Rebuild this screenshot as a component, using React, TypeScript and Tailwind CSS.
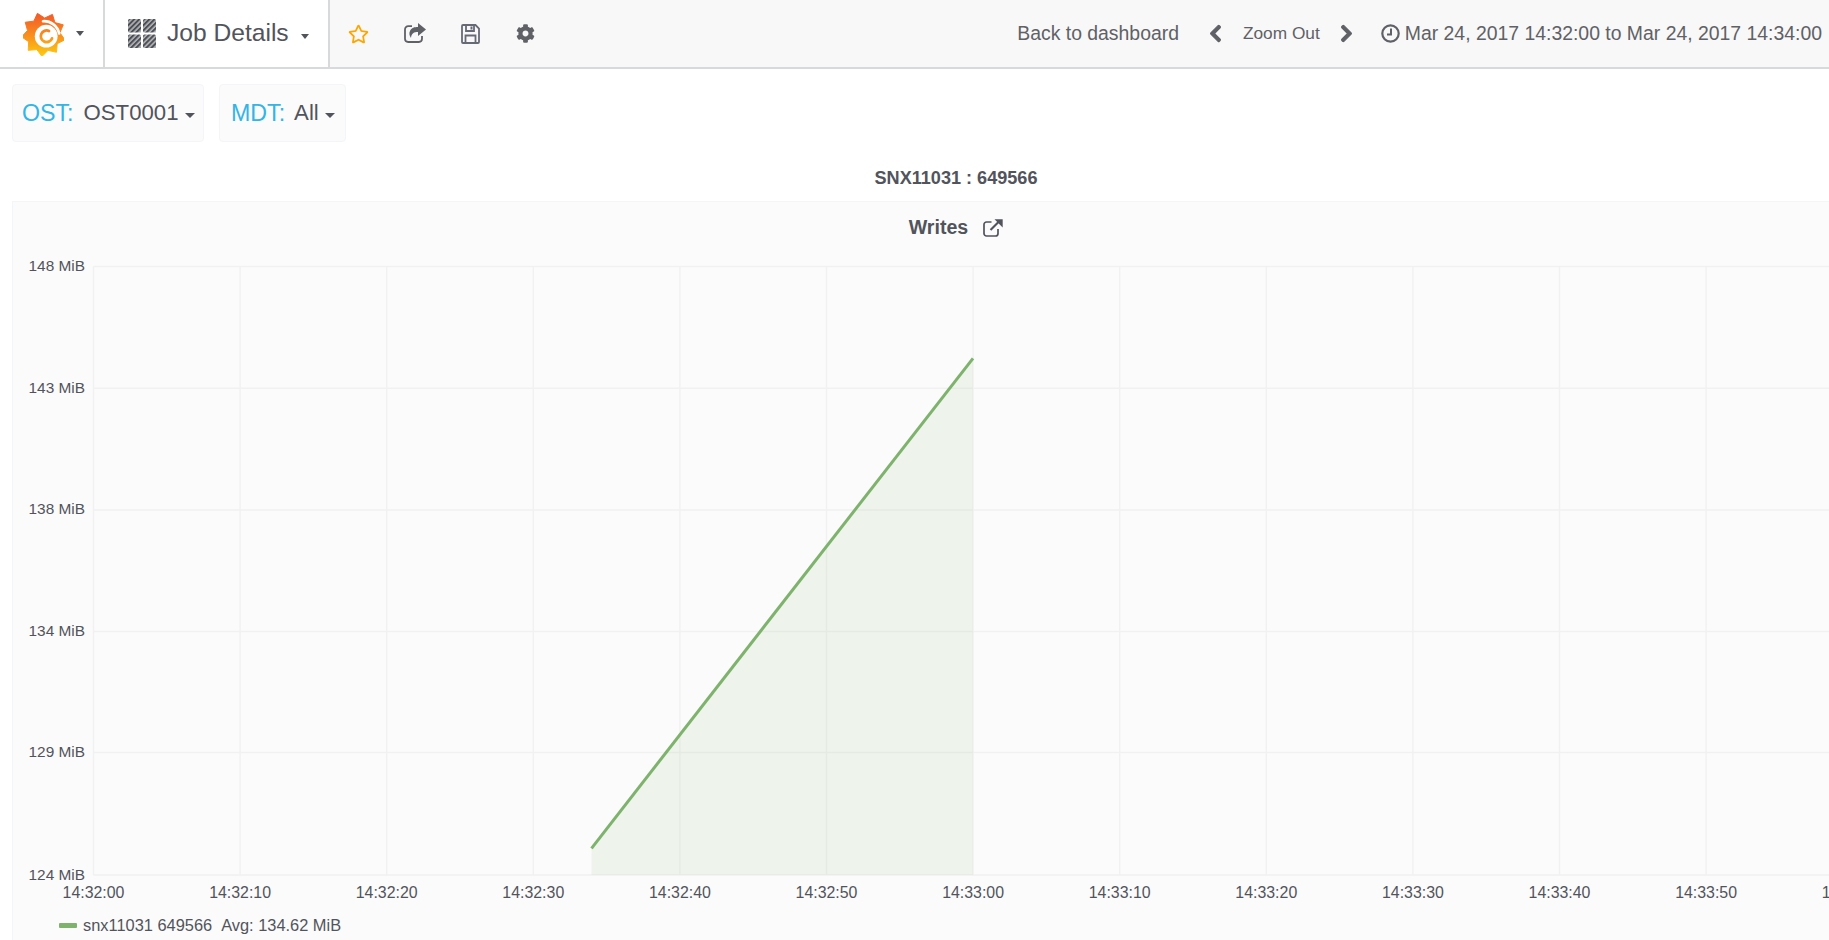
import React from "react";
import { FaRegStar, FaCog, FaChevronLeft, FaChevronRight } from "react-icons/fa";

const sans = "font-['Liberation_Sans',Arial,sans-serif]";

function Caret({ className = "" }: { className?: string }) {
  return <span className={"inline-block w-0 h-0 border-x-[4.5px] border-x-transparent border-t-[5px] border-t-[#52545c] " + className} />;
}

function Logo() {
  const cx = 20.5, cy = 22.5;
  const n = 9;
  const pts: string[] = [];
  for (let i = 0; i < n * 2; i++) {
    const r = i % 2 === 0 ? 22 : 16.5;
    const a = (i * Math.PI) / n - Math.PI / 2 - 0.28;
    pts.push(`${(cx + r * Math.cos(a)).toFixed(2)},${(cy + r * Math.sin(a)).toFixed(2)}`);
  }
  return (
    <svg width="41" height="44" viewBox="0 0 41 44">
      <defs>
        <linearGradient id="gf" gradientUnits="userSpaceOnUse" x1="0" y1="2" x2="0" y2="43">
          <stop offset="0" stopColor="#f15b2a" />
          <stop offset="0.45" stopColor="#f8871f" />
          <stop offset="1" stopColor="#fcc70f" />
        </linearGradient>
      </defs>
      <polygon points={pts.join(" ")} fill="url(#gf)" strokeLinejoin="round" stroke="url(#gf)" strokeWidth="1" />
      <circle cx="23.2" cy="24.2" r="11.4" fill="#fff" />
      <path d="M20 9.2 A15.5 15.5 0 0 1 36.2 21.6" fill="none" stroke="#fff" strokeWidth="2.6" strokeLinecap="round" />
      <path d="M29 26.4 A5.8 5.8 0 1 1 26 19" fill="none" stroke="url(#gf)" strokeWidth="2.8" strokeLinecap="round" />
    </svg>
  );
}

function DashIcon() {
  return (
    <svg width="28" height="29" viewBox="0 0 28 29">
      <defs>
        <pattern id="hatch" width="3.6" height="3.6" patternUnits="userSpaceOnUse" patternTransform="rotate(45)">
          <rect width="3.6" height="3.6" fill="#b4b5b8" />
          <rect width="2" height="3.6" fill="#4c4e55" />
        </pattern>
      </defs>
      <rect x="0" y="0" width="13" height="13.5" rx="1.5" fill="url(#hatch)" />
      <rect x="15" y="0" width="13" height="13.5" rx="1.5" fill="url(#hatch)" />
      <rect x="0" y="15.5" width="13" height="13.5" rx="1.5" fill="url(#hatch)" />
      <rect x="15" y="15.5" width="13" height="13.5" rx="1.5" fill="url(#hatch)" />
    </svg>
  );
}

function ShareIcon() {
  return (
    <svg width="22" height="20" viewBox="0 0 22 20" className="ml-[35px] -mt-[1px]">
      <path d="M8 3.2H4.2A3.2 3.2 0 0 0 1 6.4v9.4A3.2 3.2 0 0 0 4.2 19h10.6a3.2 3.2 0 0 0 3.2-3.2V13" fill="none" stroke="currentColor" strokeWidth="1.8" />
      <path d="M14 0 L22 6.5 L14 13 V9 C10 9 7.5 10 7 15 C5.2 12 5 10 6 8 C7.5 4.5 10.5 4 14 4 Z" fill="currentColor" />
    </svg>
  );
}

function SaveIcon() {
  return (
    <svg width="19" height="20" viewBox="0 0 19 20" className="ml-[35px] text-[#666a75]">
      <path d="M2 1H14.5L18 4.5V18A1 1 0 0 1 17 19H2A1 1 0 0 1 1 18V2A1 1 0 0 1 2 1Z" fill="none" stroke="currentColor" strokeWidth="1.8" />
      <path d="M5 1.5V7H13V1.5" fill="none" stroke="currentColor" strokeWidth="1.8" />
      <rect x="9.5" y="2.5" width="2" height="3" fill="currentColor" />
      <path d="M4.5 18.5V11.5H14.5V18.5" fill="none" stroke="currentColor" strokeWidth="1.8" />
    </svg>
  );
}

function ClockIcon() {
  return (
    <svg width="19" height="19" viewBox="0 0 19 19" className="ml-[28px]">
      <circle cx="9.5" cy="9.5" r="8.2" fill="none" stroke="currentColor" strokeWidth="2.2" />
      <path d="M10 4.5V10.5H6" fill="none" stroke="currentColor" strokeWidth="2" />
    </svg>
  );
}

function ExternalIcon() {
  return (
    <svg width="20" height="18" viewBox="0 0 20 18" className="ml-[15px]">
      <path d="M8.5 3H3.5A2.5 2.5 0 0 0 1 5.5V14.5A2.5 2.5 0 0 0 3.5 17H12.5A2.5 2.5 0 0 0 15 14.5V10" fill="none" stroke="currentColor" strokeWidth="1.7" />
      <path d="M7.5 11 L16 2.5" fill="none" stroke="currentColor" strokeWidth="2.2" />
      <polygon points="11.5,0.3 19.7,0.3 19.7,8.5" fill="currentColor" />
    </svg>
  );
}

function Chart() {
  const left = 80.5;
  const step = 146.6;
  const ys = [
    ["148 MiB", 12.5],
    ["143 MiB", 134.2],
    ["138 MiB", 255.9],
    ["134 MiB", 377.6],
    ["129 MiB", 498.5],
    ["124 MiB", 621],
  ] as [string, number][];
  const times = ["14:32:00", "14:32:10", "14:32:20", "14:32:30", "14:32:40", "14:32:50", "14:33:00", "14:33:10", "14:33:20", "14:33:30", "14:33:40", "14:33:50", "14:34:00"];
  const right = left + step * 12;
  return (
    <svg width="1890" height="650" viewBox="0 0 1890 650" className="block">
      {ys.map(([l, y]) => (
        <g key={l}>
          <line x1={left} x2={right} y1={y} y2={y} stroke="#f1f1f1" strokeWidth="1.5" />
          <text x={left - 8.5} y={y + 4.5} textAnchor="end" fontSize="15.4" fill="#52545c" fontFamily="Liberation Sans">{l}</text>
        </g>
      ))}
      {times.map((t, i) => (
        <g key={t}>
          <line x1={left + i * step} x2={left + i * step} y1={12.5} y2={621} stroke="#f1f1f1" strokeWidth="1.5" />
          <text x={left + i * step} y={644} textAnchor="middle" fontSize="15.9" fill="#52545c" fontFamily="Liberation Sans">{t}</text>
        </g>
      ))}
      <polygon points="578.5,594.3 960,104.3 960,621 578.5,621" fill="#7eb26d" fillOpacity="0.1" />
      <line x1="578.5" y1="594.3" x2="960" y2="104.3" stroke="#7eb26d" strokeWidth="3" />
    </svg>
  );
}

export default function App() {
  return (
    <div className={"w-full h-[940px] overflow-hidden bg-white text-[#52545c] " + sans}>
      <nav className="h-[69px] flex items-stretch bg-[#f8f8f8] border-b-2 border-[#d8d9da]">
        <div className="w-[105px] bg-white border-r-2 border-[#d8d9da] flex items-center pl-[23px] gap-[12px]">
          <Logo />
          <Caret />
        </div>
        <div className="w-[225px] bg-white border-r-2 border-[#d8d9da] flex items-center pl-[23px] whitespace-nowrap">
          <DashIcon />
          <span className="ml-[11px] text-[24.6px] text-[#52545c]">Job Details</span>
          <Caret className="ml-[12px] mt-[6px]" />
        </div>
        <div className="flex items-center text-[#5f6166]">
          <FaRegStar className="ml-[18px] text-[#ffa500] w-[21px] h-[20px]" />
          <ShareIcon />
          <SaveIcon />
          <FaCog className="ml-[36px] w-[19px] h-[19px]" />
        </div>
        <div className="ml-auto flex items-center pr-[7px] text-[#5f6166] whitespace-nowrap">
          <span className="text-[19.4px]">Back to dashboard</span>
          <FaChevronLeft className="ml-[30px] w-[13px] h-[19px]" stroke="currentColor" strokeWidth={30} />
          <span className="ml-[21px] text-[17.3px]">Zoom Out</span>
          <FaChevronRight className="ml-[20px] w-[13px] h-[19px]" stroke="currentColor" strokeWidth={30} />
          <ClockIcon />
          <span className="ml-[5px] text-[19.4px]">Mar 24, 2017 14:32:00 to Mar 24, 2017 14:34:00</span>
        </div>
      </nav>

      <div className="w-[1900px] pl-[12px]">
        <div className="flex gap-[15px] pt-[15px]">
          <div className="h-[58px] w-[192px] bg-[#fbfbfb] border border-[#f4f5f8] rounded-[4px] flex items-center pl-[9px] text-[22.2px] whitespace-nowrap">
            <span className="text-[#33b5e5] text-[23.2px]">OST:</span>
            <span className="ml-[10px]">OST0001</span>
            <Caret className="ml-[6px] mt-[4px] border-x-[5px]" />
          </div>
          <div className="h-[58px] w-[127px] bg-[#fbfbfb] border border-[#f4f5f8] rounded-[4px] flex items-center pl-[11px] text-[22.2px] whitespace-nowrap">
            <span className="text-[#33b5e5] text-[23.2px]">MDT:</span>
            <span className="ml-[9px]">All</span>
            <Caret className="ml-[6px] mt-[4px] border-x-[5px]" />
          </div>
        </div>
        <div className="h-[59px] flex items-center justify-center pt-[15px] text-[18.1px] font-bold">SNX11031 : 649566</div>
        <div className="bg-[#fbfbfb] border border-[#f4f5f8] h-[760px]">
          <div className="h-[52px] flex items-center justify-center text-[19.6px] font-bold">
            <span>Writes</span>
            <ExternalIcon />
          </div>
          <Chart />
          <div className="flex items-center pl-[46px] text-[16.4px] mt-[11px] h-[20px]">
            <span className="w-[18px] h-[5px] bg-[#7eb26d] rounded-[1px] mr-[6px]" />
            <span>snx11031 649566</span>
            <span className="ml-[9px]">Avg: 134.62 MiB</span>
          </div>
        </div>
      </div>
    </div>
  );
}
